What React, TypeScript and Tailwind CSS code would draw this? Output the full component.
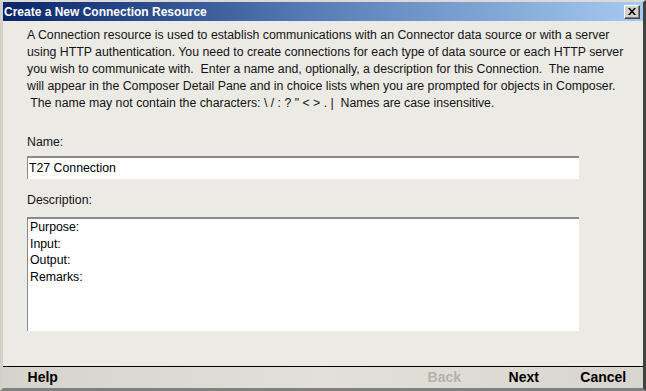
import React from 'react';

const font = { fontFamily: '"Liberation Sans", Arial, sans-serif' };

const intro = [
  'A Connection resource is used to establish communications with an Connector data source or with a server',
  'using HTTP authentication. You need to create connections for each type of data source or each HTTP server',
  'you wish to communicate with.  Enter a name and, optionally, a description for this Connection.  The name',
  'will appear in the Composer Detail Pane and in choice lists when you are prompted for objects in Composer.',
  ' The name may not contain the characters: \\ / : ? " < > . |  Names are case insensitive.',
];

const descLines = ['Purpose:', 'Input:', 'Output:', 'Remarks:'];

const CloseButton: React.FC = () => (
  <div className="w-[16px] h-[14px] bg-[#d4d0c8] border-t border-l border-t-white border-l-white border-r border-b border-r-[#404040] border-b-[#404040] flex items-center justify-center shadow-[inset_-1px_-1px_0_#808080]">
    <svg width="8" height="7" viewBox="0 0 8 7">
      <path d="M0 0h2l2 2.5L6 0h2L5 3.5 8 7H6L4 4.5 2 7H0l3-3.5z" fill="#000" />
    </svg>
  </div>
);

const WizardButton: React.FC<{ label: string; disabled?: boolean }> = ({ label, disabled }) => (
  <div
    className={`w-[79.5px] h-full flex items-center justify-center text-[14px] font-bold ${
      disabled ? 'text-[#b4b2ae]' : 'text-black'
    }`}
  >
    {label}
  </div>
);

export default function App() {
  return (
    <div
      style={font}
      className="w-[646px] h-[391px] flex flex-col bg-[#ebeae5] border-t-2 border-l-[3px] border-r-[3px] border-b-[3px] border-t-[#dcdad4] border-l-[#d4d0c8] border-r-[#404040] border-b-[#808080] overflow-hidden"
    >
      {/* title bar */}
      <div className="h-[19px] shrink-0 flex items-center justify-between pl-px pr-[3px] bg-gradient-to-r from-[#0a246a] via-[#5a7fb8] to-[#a6caf0]">
        <span className="text-white font-bold text-[12px] leading-none">Create a New Connection Resource</span>
        <CloseButton />
      </div>

      {/* body */}
      <div className="flex-1 flex flex-col pl-[24px] pt-[6px]">
        <div className="text-[12.3px] leading-[17px] text-[#141414] whitespace-pre">
          {intro.map((line, i) => (
            <div key={i}>{line}</div>
          ))}
        </div>

        <div className="mt-[22px] text-[12.3px] leading-[17px] text-[#141414]">Name:</div>
        <div className="mt-[5px] w-[552px] h-[23px] bg-white border-t-2 border-l border-t-[#8a8a8a] border-l-[#8a8a8a] flex items-center pl-px text-[12.3px] text-black">
          T27 Connection
        </div>

        <div className="mt-[13px] text-[12.3px] leading-[17px] text-[#141414]">Description:</div>
        <div className="mt-[8px] w-[552px] h-[114px] bg-white border-t-2 border-l border-t-[#8a8a8a] border-l-[#8a8a8a] pl-[2px] text-[12.3px] leading-[16.7px] text-black">
          {descLines.map((l) => (
            <div key={l}>{l}</div>
          ))}
        </div>
      </div>

      {/* wizard buttons */}
      <div className="h-[22px] shrink-0 border-t border-t-black flex justify-between bg-gradient-to-r from-[#d6d3cc] via-[#e2e0da] to-[#d8d5ce]">
        <WizardButton label="Help" />
        <div className="flex h-full">
          <WizardButton label="Back" disabled />
          <WizardButton label="Next" />
          <WizardButton label="Cancel" />
        </div>
      </div>
    </div>
  );
}
